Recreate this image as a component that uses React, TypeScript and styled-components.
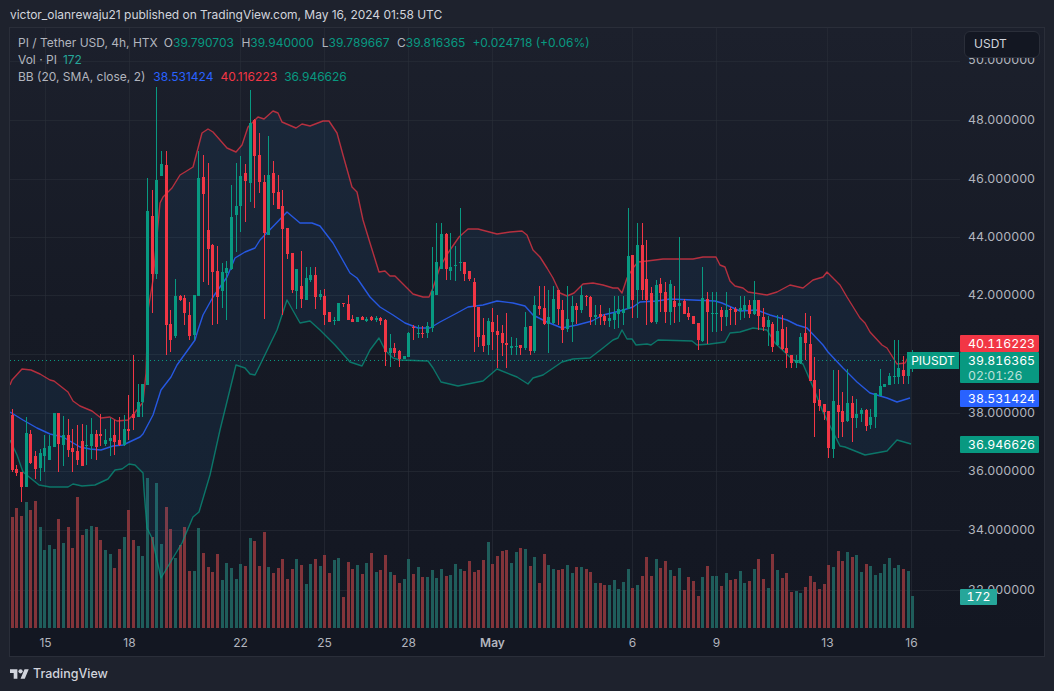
import React from "react";
import styled, { createGlobalStyle } from "styled-components";

const GREEN = "#089981";
const RED = "#f23645";
const BLUE = "#2962ff";
const FONT = `Inter, "Liberation Sans", sans-serif`;

type C = [number, number, number, number, "g" | "r"];
const candles: C[] = [
  [409,415,470,472,"r"],[465,469,473,476,"r"],[472,472,487,502,"r"],[417,433,487,487,"g"],[430,434,463,464,"r"],
  [451,456,469,479,"r"],[449,453,468,481,"g"],[435,448,456,472,"g"],[435,446,460,460,"g"],[413,413,447,447,"g"],
  [413,413,444,472,"r"],[416,435,445,466,"g"],[419,435,450,457,"r"],[429,448,452,472,"r"],[425,451,460,465,"r"],
  [424,441,466,466,"r"],[425,445,446,465,"g"],[418,434,446,459,"g"],[430,434,447,460,"r"],[414,434,436,446,"r"],
  [429,440,444,446,"g"],[418,438,441,456,"g"],[420,435,442,455,"r"],[417,440,445,446,"r"],[415,429,445,446,"g"],
  [395,429,431,440,"r"],[355,414,418,430,"r"],[384,402,417,417,"g"],[384,384,402,417,"g"],[178,211,385,385,"g"],
  [190,216,274,313,"r"],[87,180,274,279,"g"],[151,164,176,176,"g"],[151,165,325,355,"r"],[310,324,340,352,"r"],
  [279,296,336,338,"g"],[295,296,300,301,"r"],[295,298,313,325,"r"],[302,315,336,340,"r"],[295,295,335,340,"g"],
  [151,178,296,296,"g"],[155,177,194,282,"r"],[163,230,249,285,"r"],[244,245,272,325,"r"],[246,271,297,324,"r"],
  [263,272,291,308,"g"],[261,268,273,320,"g"],[185,217,269,270,"g"],[163,206,215,252,"g"],[156,176,206,232,"g"],
  [164,173,181,222,"r"],[90,123,183,202,"g"],[119,120,156,208,"r"],[133,155,182,193,"r"],[175,182,233,319,"r"],
  [136,175,235,235,"g"],[161,173,193,205,"r"],[175,192,209,209,"r"],[190,206,229,315,"r"],[228,228,254,259,"r"],
  [253,253,290,293,"r"],[269,269,291,309,"g"],[251,286,299,308,"r"],[267,278,300,300,"g"],[267,275,280,282,"g"],
  [267,275,297,309,"r"],[290,294,297,300,"g"],[289,296,315,325,"r"],[312,312,322,322,"r"],[317,320,321,325,"g"],
  [303,303,321,321,"g"],[303,303,304,307,"r"],[295,304,320,320,"r"],[315,319,322,322,"r"],[317,317,322,322,"g"],
  [316,317,320,320,"r"],[317,319,321,322,"g"],
  [316,317,320,321,"r"],[316,318,320,322,"g"],[317,318,321,325,"r"],[319,320,352,366,"r"],[334,348,353,367,"g"],
  [343,348,353,357,"r"],[350,351,359,367,"r"],[356,356,359,359,"g"],[332,333,357,357,"g"],[325,327,328,340,"r"],
  [325,333,334,338,"g"],[326,333,334,338,"r"],[322,326,333,338,"g"],[247,291,328,332,"g"],[223,262,295,295,"g"],
  [223,234,269,269,"g"],[233,234,269,280,"r"],[233,267,271,280,"g"],[246,265,266,281,"g"],[208,262,263,271,"g"],
  [262,262,274,281,"r"],[271,271,279,281,"r"],[278,282,307,352,"r"],[307,307,337,347,"r"],[318,335,346,352,"r"],
  [318,321,345,355,"g"],[308,322,332,350,"r"],[315,331,335,368,"r"],[325,333,343,356,"r"],[313,343,345,368,"r"],
  [337,346,348,355,"g"],[338,346,347,355,"g"],[345,345,348,355,"r"],[312,327,348,350,"g"],[326,326,351,355,"r"],
  [296,305,351,353,"g"],[286,306,309,315,"r"],[286,308,324,325,"r"],[290,317,324,353,"g"],[286,299,323,324,"g"],
  [290,290,309,325,"r"],[300,310,330,343,"r"],[286,319,329,332,"g"],[296,306,322,342,"g"],[303,306,310,324,"r"],
  [286,295,310,313,"g"],[295,296,297,306,"r"],[296,297,317,325,"r"],[305,315,317,325,"g"],[305,314,317,325,"r"],
  [314,316,321,325,"r"],[308,318,321,327,"g"],[296,313,320,329,"g"],[296,309,314,328,"g"],[296,309,313,325,"g"],
  [208,256,309,309,"g"],[255,255,300,318,"r"],[223,245,290,318,"g"],[223,245,290,300,"r"],[240,279,300,325,"r"],
  [287,293,322,323,"r"],[280,285,322,324,"g"],[278,284,293,312,"r"],[282,292,312,323,"r"],[280,284,312,325,"g"],
  [286,301,307,323,"r"],[237,303,306,322,"g"],[299,301,314,314,"r"],[307,313,317,320,"r"],[316,316,324,324,"r"],
  [323,323,340,350,"r"],[267,298,341,342,"g"],[292,299,312,344,"r"],[292,313,314,332,"g"],[292,313,314,332,"g"],
  [307,310,317,331,"r"],[292,310,317,326,"g"],[307,309,310,325,"r"],[307,309,312,325,"r"],[296,308,311,320,"g"],
  [296,305,310,318,"g"],[300,305,314,318,"r"],[281,300,314,315,"g"],[300,300,316,330,"r"],[308,317,327,331,"r"],
  [316,320,327,346,"g"],[322,324,347,352,"r"],[315,331,345,346,"g"],[315,329,349,350,"r"],[327,348,353,368,"r"],
  [355,355,363,368,"r"],[355,360,363,368,"g"],[333,337,363,364,"g"],[313,333,343,360,"r"],[316,344,381,381,"r"],
  [357,380,403,437,"r"],[389,400,406,411,"r"],[404,404,412,420,"r"],[411,411,448,458,"r"],[370,401,449,458,"g"],
  [370,405,412,438,"r"],[392,411,422,437,"r"],[369,403,421,422,"g"],[396,403,418,442,"r"],[399,414,418,428,"g"],
  [408,410,414,422,"g"],[409,410,426,431,"r"],[409,417,425,429,"g"],[393,393,417,428,"g"],[369,386,396,396,"g"],
  [384,384,387,387,"g"],[373,376,385,385,"g"],[340,376,377,384,"g"],[340,368,377,384,"g"],[356,370,376,384,"r"],
  [353,360,376,384,"g"],[350,354,362,372,"g"],
];

const volA: [number, string][] = [
  [81,"r"],[54,"r"],[78,"r"],[36,"g"],[60,"r"],[33,"r"],[111,"g"],[180,"g"],[165,"g"],[177,"g"],[87,"r"],[159,"g"],[111,"r"],[174,"r"],[21,"r"],[135,"r"],[117,"g"],[108,"g"],[111,"r"],[150,"r"],[180,"g"],[192,"g"],[234,"r"],[177,"r"],[141,"g"],[60,"r"],[150,"r"],[168,"g"],[198,"g"],[-36,"g"],[141,"r"],[-21,"g"],[162,"g"],[51,"r"],[117,"r"],[204,"g"],[165,"r"],[111,"r"],[243,"r"],[243,"g"],[114,"g"],[189,"r"],[231,"r"],[246,"r"],[192,"r"],[270,"g"],[219,"g"],[234,"g"],[267,"g"],[222,"g"],[228,"r"],[144,"g"],[153,"r"],[228,"r"],[126,"r"],[231,"g"],[249,"r"],[234,"r"],[207,"r"],[267,"r"],[237,"r"],[207,"g"],[225,"r"],[282,"g"],[222,"g"],[207,"r"],[228,"g"],[195,"r"],[249,"r"],[210,"g"],[204,"g"],[321,"r"],[216,"r"],[237,"r"],[225,"g"],[252,"r"],[219,"g"],[189,"r"],[246,"g"],[240,"r"],[195,"r"],[246,"g"],[255,"r"],[279,"r"],[267,"g"],[207,"g"],[252,"r"],[231,"g"],[261,"r"],[261,"g"],[240,"g"],[264,"g"],[237,"g"],[258,"r"],[255,"g"],[222,"g"],
];
const volB: [number, string][] = [
  [117,"g"],[123,"r"],[93,"r"],[126,"r"],[120,"r"],[90,"r"],[36,"g"],[102,"r"],[78,"r"],[63,"r"],[60,"r"],[99,"g"],[66,"g"],[54,"r"],[57,"g"],[108,"r"],[81,"g"],[159,"r"],[72,"r"],[105,"g"],[117,"g"],[120,"r"],[117,"r"],[105,"g"],[129,"g"],[111,"r"],[111,"g"],[117,"r"],[126,"r"],[159,"g"],[159,"r"],[165,"r"],[165,"g"],[150,"g"],[177,"g"],[156,"g"],[117,"g"],[174,"r"],[165,"g"],[138,"r"],[81,"r"],[138,"r"],[87,"g"],[114,"r"],[93,"r"],[120,"g"],[138,"r"],[114,"g"],[180,"r"],[141,"r"],[153,"r"],[198,"r"],[141,"g"],[108,"r"],[138,"g"],[138,"g"],[168,"r"],[129,"g"],[150,"r"],[147,"r"],[123,"g"],[159,"g"],[153,"r"],[117,"g"],[87,"r"],[147,"r"],[174,"g"],[72,"r"],[120,"g"],[144,"r"],[129,"r"],[186,"r"],[183,"g"],[189,"g"],[171,"r"],[138,"r"],[156,"r"],[177,"r"],[162,"r"],[105,"r"],[111,"g"],[63,"r"],[93,"r"],[66,"g"],[81,"r"],[75,"g"],[126,"g"],[102,"r"],[108,"g"],[135,"g"],[129,"g"],[102,"g"],[84,"g"],[114,"g"],[105,"g"],[117,"r"],[123,"g"],[198,"g"],
];
const volumes = [
  ...volA.map(([t, c]) => ({ top: 490 + t / 3, c })),
  ...volB.map(([t, c]) => ({ top: 530 + t / 3, c })),
];

const upper = "10,385 12,380 22,369 31,370 40,374 50,380 54,381 68,392 73,401 80,406 92,411 101,418 110,417 117,421 128,420 133,415 143,402 146,373 148,310 153,280 160,203 163,197 172,188 180,175 185,172 193,167 202,133 208,129 213,132 227,148 236,152 242,145 248,127 258,117 264,119 273,111 278,113 282,122 296,128 302,124 310,126 323,121 329,121 337,133 343,155 352,187 357,192 363,220 370,243 379,272 385,271 390,276 395,276 403,284 413,294 423,297 429,297 433,288 440,267 448,253 459,237 468,229 478,229 497,234 510,232 522,231 527,235 533,250 540,257 547,268 553,278 560,293 567,296 574,293 583,284 593,283 603,285 613,288 618,288 622,293 627,278 633,268 638,262 647,261 663,259 693,259 703,257 716,257 720,265 725,267 730,281 735,286 743,288 748,292 767,295 777,292 790,285 803,288 813,280 823,277 827,272 840,285 847,297 860,318 865,323 870,332 882,345 887,348 897,364 905,363 911,352";
const basis = "10,412 23,420 37,428 50,434 63,437 80,447 90,449 101,450 113,446 123,445 140,437 143,434 153,415 161,390 171,377 177,365 195,340 198,330 203,315 213,297 227,277 235,258 245,252 255,248 260,240 287,212 300,223 312,223 320,226 333,243 350,273 357,278 370,297 380,307 393,315 405,323 418,328 430,328 440,322 457,313 468,307 483,305 497,301 513,303 525,306 533,315 547,322 562,328 577,325 592,321 603,315 620,311 633,307 640,302 657,301 670,299 693,300 715,301 722,303 740,311 757,310 770,315 787,320 797,325 807,328 823,345 828,352 843,368 857,382 870,393 887,398 897,402 910,398";
const lower = "10,440 17,455 23,472 39,485 50,487 68,487 73,484 82,486 95,485 108,479 115,470 122,469 129,464 135,465 143,473 144,490 147,528 152,538 161,578 173,558 182,543 193,517 199,512 210,475 220,430 236,365 245,368 250,374 255,375 260,365 277,330 287,300 300,323 310,321 320,330 335,345 350,362 362,366 370,350 379,338 385,350 393,358 400,360 428,361 433,368 441,382 458,386 483,381 497,369 517,377 528,384 533,378 543,375 562,362 573,359 590,358 603,348 613,340 618,338 622,330 627,339 632,339 636,345 647,344 651,345 658,340 692,341 697,345 710,344 725,342 730,333 740,332 753,328 767,330 775,343 793,360 803,364 813,387 823,412 840,446 845,447 865,455 887,451 897,440 911,444";
const band = upper + " " + lower.split(" ").reverse().join(" ");

const gridY = [61, 120, 179, 237, 295, 354, 413, 471, 530, 590];
const gridX = [45, 129, 240, 324, 408, 492, 632, 716, 827, 911];
const priceTicks = [
  ["50.000000", 60], ["48.000000", 120], ["46.000000", 179], ["44.000000", 237], ["42.000000", 295],
  ["38.000000", 413], ["36.000000", 471], ["34.000000", 530], ["32.000000", 590],
] as const;
const timeLabels = [
  ["15", 45], ["18", 129], ["22", 240], ["25", 324], ["28", 408], ["May", 492], ["6", 632], ["9", 716], ["13", 827], ["16", 911],
] as const;

const PANE_LEFT = 10;
const PANE_TOP = 28;
const pixelX = (i: number) => Math.floor(12.33 + (14 / 3) * i);

const Global = createGlobalStyle`
  html, body { margin: 0; padding: 0; background: #1e222d; }
  #root { width: 1054px; height: 691px; overflow: hidden; }
`;

const Page = styled.div`
  display: flex;
  flex-direction: column;
  width: 1054px;
  height: 691px;
  background: #1e222d;
  font-family: ${FONT};
  color: #b2b5be;
`;

const PublishLine = styled.div`
  height: 27px;
  line-height: 30px;
  padding-left: 10px;
  font-size: 12px;
  letter-spacing: -0.03px;
  color: #d1d4dc;
  box-sizing: border-box;
  white-space: nowrap;
`;

const ChartFrame = styled.div`
  display: grid;
  grid-template-columns: 950px 84px;
  grid-template-rows: 600px 28px;
  width: 1034px;
  margin-left: 9px;
  border: 1px solid #2a2e39;
  background: linear-gradient(to bottom, #1c202c 0%, #161a25 45%, #131722 100%);
`;

const Pane = styled.div`
  position: relative;
  overflow: hidden;
`;

const ChartSvg = styled.svg`
  display: block;
`;

const Legend = styled.div`
  position: absolute;
  left: 8px;
  top: 6px;
  display: flex;
  flex-direction: column;
  font-size: 12px;
  line-height: 17px;
  white-space: nowrap;
`;

const LegendRow = styled.div`
  display: flex;
`;

const LegendLabel = styled.span<{ $gap?: number }>`
  color: #b2b5be;
  margin-right: ${(p) => p.$gap ?? 0}px;
`;

const LegendValue = styled.span<{ $color: string; $gap?: number }>`
  color: ${(p) => p.$color};
  margin-right: ${(p) => p.$gap ?? 0}px;
`;

const PriceAxis = styled.div`
  position: relative;
  overflow: visible;
  font-variant-numeric: tabular-nums;
`;

const PriceTick = styled.div`
  position: absolute;
  left: 8px;
  font-size: 12.3px;
  line-height: 16px;
  color: #b2b5be;
  transform: translateY(-8px);
`;

const PriceTag = styled.div<{ $bg: string }>`
  position: absolute;
  left: 0;
  width: 79px;
  box-sizing: border-box;
  padding-left: 8px;
  background: ${(p) => p.$bg};
  color: #fff;
  font-size: 12.3px;
  line-height: 17px;
  border-radius: 1px;
`;

const TagSubline = styled.div`
  color: rgba(255, 255, 255, 0.72);
  line-height: 14px;
`;

const VolumeTag = styled(PriceTag)`
  width: 37px;
  padding-left: 0;
  text-align: center;
  line-height: 16px;
`;

const SymbolTag = styled.div`
  position: absolute;
  right: 1px;
  top: 324px;
  width: 52px;
  height: 17px;
  line-height: 17px;
  text-align: center;
  background: ${GREEN};
  color: #fff;
  font-size: 12px;
`;

const CurrencyButton = styled.div`
  position: absolute;
  left: 4px;
  top: 3px;
  width: 76px;
  height: 27px;
  box-sizing: border-box;
  padding-left: 9px;
  line-height: 24px;
  font-size: 12px;
  color: #d1d4dc;
  background: #131722;
  border: 1.5px solid #2a2e39;
  border-radius: 6px;
`;

const TimeAxis = styled.div`
  position: relative;
  background: #131722;
`;

const AxisCorner = styled.div`
  background: #131722;
`;

const TimeLabel = styled.span<{ $bold?: boolean }>`
  position: absolute;
  top: 7px;
  transform: translateX(-50%);
  font-size: 12px;
  line-height: 16px;
  color: #b2b5be;
  font-weight: ${(p) => (p.$bold ? 600 : 400)};
`;

const Footer = styled.div`
  display: flex;
  align-items: center;
  gap: 4px;
  padding: 9px 0 0 10px;
  font-size: 12.5px;
  font-weight: 500;
  color: #d1d4dc;
`;

const LogoMark = () => (
  <svg width="19" height="10" viewBox="0 7 36 18" fill="#d1d4dc">
    <path d="M14 25H7V14H0V7h14v18zM28 25h-8l7.5-18h8L28 25z" />
    <circle cx="20" cy="11" r="4" />
  </svg>
);

export default function App() {
  return (
    <Page>
      <Global />
      <PublishLine>victor_olanrewaju21 published on TradingView.com, May 16, 2024 01:58 UTC</PublishLine>
      <ChartFrame>
        <Pane>
          <ChartSvg width={950} height={600} viewBox={`${PANE_LEFT} ${PANE_TOP} 950 600`}>
            <g stroke="#2a2e39" strokeOpacity={0.6} strokeWidth={1} shapeRendering="crispEdges">
              {gridY.map((y) => <line key={y} x1={10} x2={960} y1={y + 0.5} y2={y + 0.5} />)}
              {gridX.map((x) => <line key={x} x1={x + 0.5} x2={x + 0.5} y1={28} y2={628} />)}
            </g>
            <g shapeRendering="crispEdges">
              {volumes.map((v, i) => (
                <rect key={i} x={pixelX(i) - 1} y={v.top} width={3} height={628 - v.top}
                  fill={v.c === "g" ? "#1f5d5b" : "#82343a"} />
              ))}
            </g>
            <polygon points={band} fill="#2196f3" fillOpacity={0.08} />
            <polyline points={upper} fill="none" stroke={RED} strokeOpacity={0.72} strokeWidth={1.4} strokeLinejoin="round" />
            <polyline points={basis} fill="none" stroke={BLUE} strokeOpacity={0.85} strokeWidth={1.4} strokeLinejoin="round" />
            <polyline points={lower} fill="none" stroke={GREEN} strokeOpacity={0.72} strokeWidth={1.4} strokeLinejoin="round" />
            <line x1={10} x2={906} y1={360.5} y2={360.5} stroke={GREEN} strokeWidth={1} strokeDasharray="1 3" />
            <g shapeRendering="crispEdges">
              {candles.map(([wt, bt, bb, wb, c], i) => {
                const x = pixelX(i);
                const fill = c === "g" ? GREEN : RED;
                return (
                  <g key={i} fill={fill}>
                    <rect x={x} y={wt} width={1} height={wb - wt} />
                    <rect x={x - 1} y={bt} width={3} height={Math.max(bb - bt, 1)} />
                  </g>
                );
              })}
            </g>
          </ChartSvg>
          <Legend>
            <LegendRow>
              <LegendLabel $gap={6}>PI / Tether USD, 4h, HTX</LegendLabel>
              <LegendLabel>O</LegendLabel><LegendValue $color={GREEN} $gap={7.5}>39.790703</LegendValue>
              <LegendLabel>H</LegendLabel><LegendValue $color={GREEN} $gap={8}>39.940000</LegendValue>
              <LegendLabel>L</LegendLabel><LegendValue $color={GREEN} $gap={7.5}>39.789667</LegendValue>
              <LegendLabel>C</LegendLabel><LegendValue $color={GREEN} $gap={7}>39.816365</LegendValue>
              <LegendValue $color={GREEN}>+0.024718 (+0.06%)</LegendValue>
            </LegendRow>
            <LegendRow>
              <LegendLabel $gap={6}>Vol · PI</LegendLabel>
              <LegendValue $color="#26a69a">172</LegendValue>
            </LegendRow>
            <LegendRow>
              <LegendLabel $gap={8}>BB (20, SMA, close, 2)</LegendLabel>
              <LegendValue $color={BLUE} $gap={7}>38.531424</LegendValue>
              <LegendValue $color={RED} $gap={7}>40.116223</LegendValue>
              <LegendValue $color={GREEN}>36.946626</LegendValue>
            </LegendRow>
          </Legend>
          <SymbolTag>PIUSDT</SymbolTag>
        </Pane>
        <PriceAxis>
          {priceTicks.map(([t, y]) => (
            <PriceTick key={t} style={{ top: y - PANE_TOP }}>{t}</PriceTick>
          ))}
          <CurrencyButton>USDT</CurrencyButton>
          <PriceTag $bg={RED} style={{ top: 335 - PANE_TOP }}>40.116223</PriceTag>
          <PriceTag $bg={GREEN} style={{ top: 352 - PANE_TOP }}>
            39.816365
            <TagSubline>02:01:26</TagSubline>
          </PriceTag>
          <PriceTag $bg={BLUE} style={{ top: 390 - PANE_TOP }}>38.531424</PriceTag>
          <PriceTag $bg={GREEN} style={{ top: 436 - PANE_TOP }}>36.946626</PriceTag>
          <VolumeTag $bg="#26a69a" style={{ top: 589 - PANE_TOP }}>172</VolumeTag>
        </PriceAxis>
        <TimeAxis>
          {timeLabels.map(([t, x]) => (
            <TimeLabel key={t} $bold={t === "May"} style={{ left: x - PANE_LEFT + 0.5 }}>{t}</TimeLabel>
          ))}
        </TimeAxis>
        <AxisCorner />
      </ChartFrame>
      <Footer>
        <LogoMark />
        TradingView
      </Footer>
    </Page>
  );
}
